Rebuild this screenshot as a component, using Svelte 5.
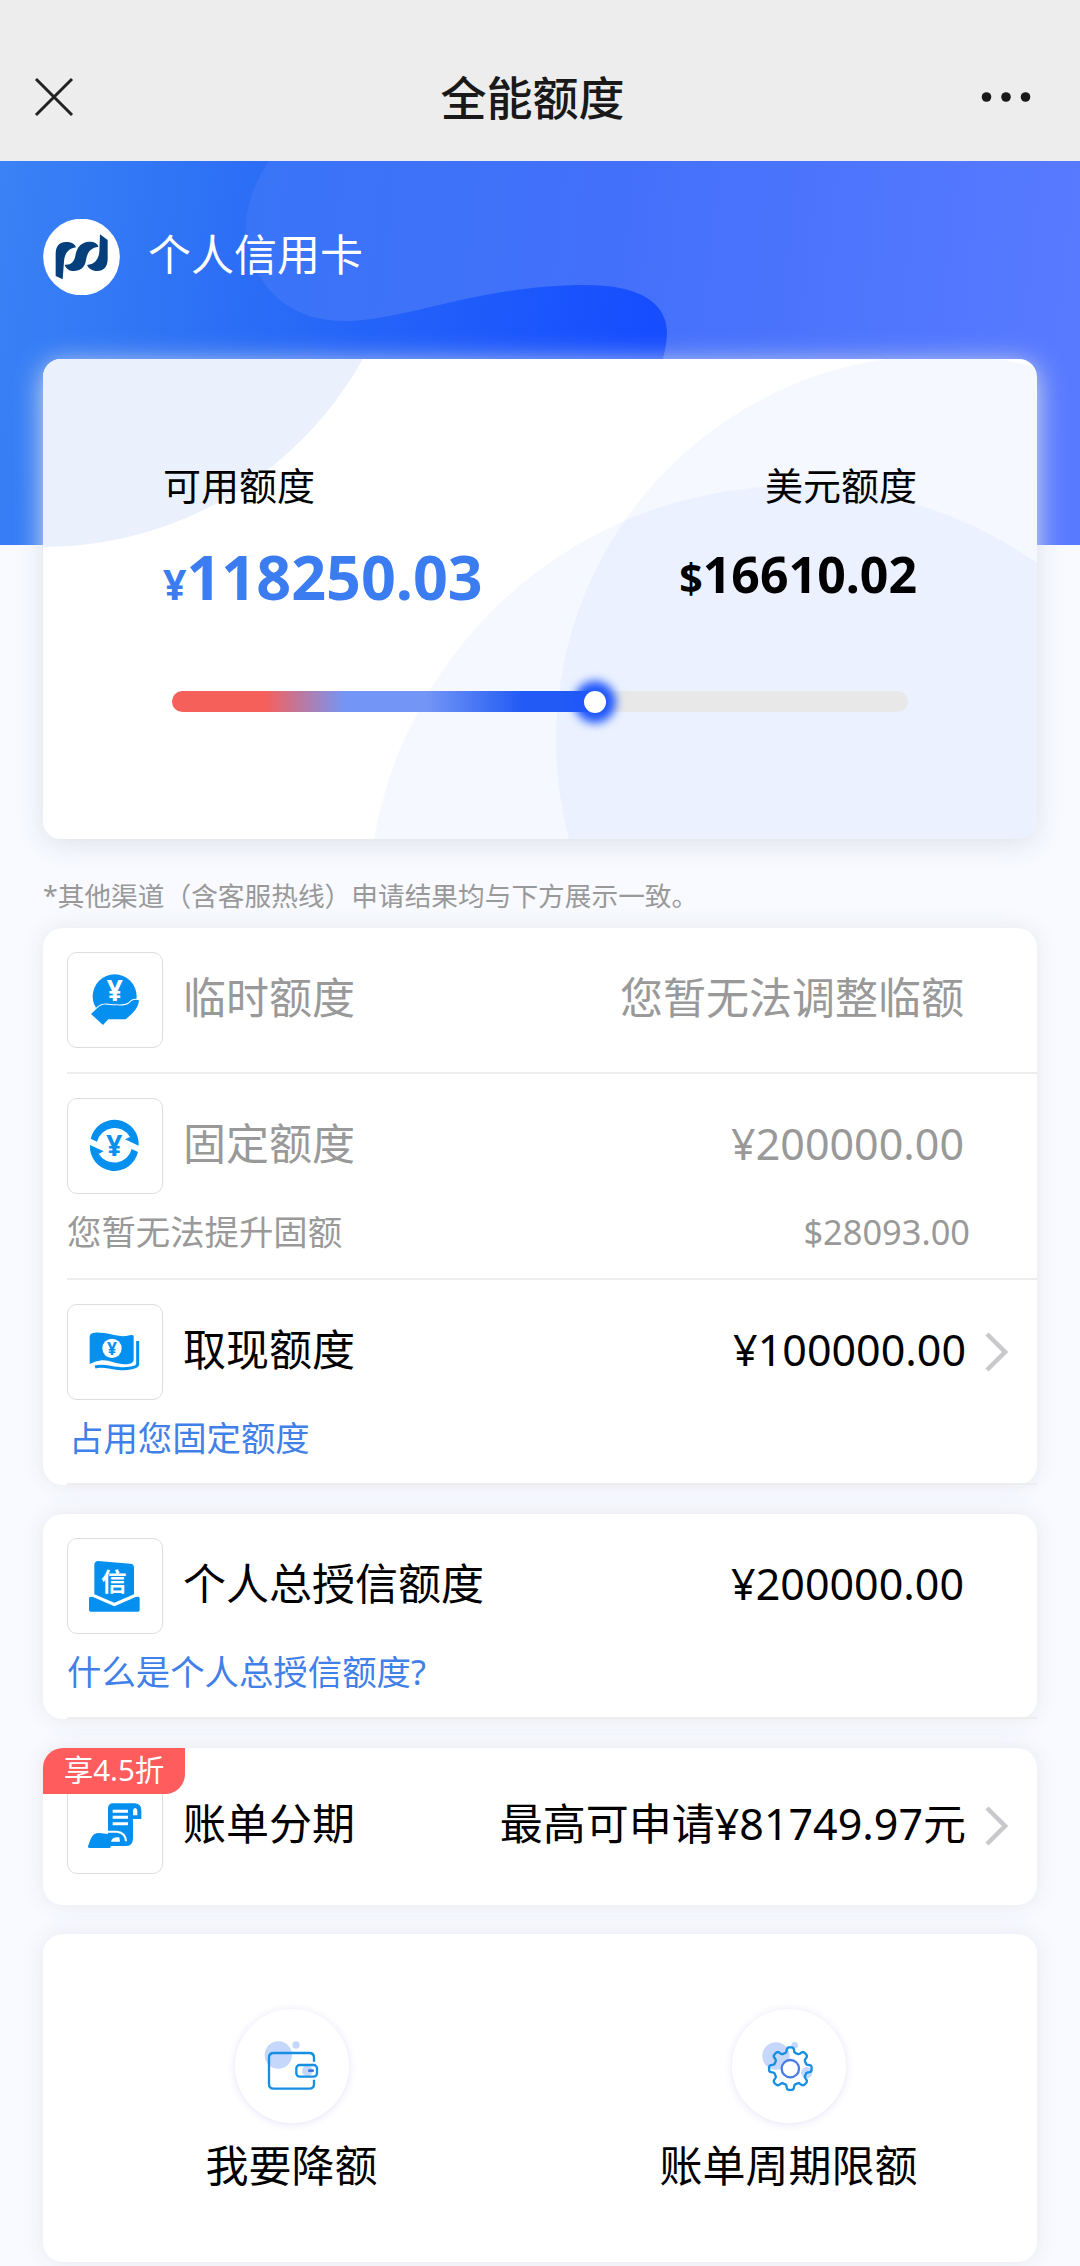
<script lang="ts">
  type Row = {
    icon: string;
    title: string;
    value: string;
    muted?: boolean;
    arrow?: boolean;
    note?: string;
    noteValue?: string;
    link?: boolean;
    indent?: boolean;
    badge?: string;
  };

  const groups: Row[][] = [
    [
      { icon: 'temp', title: '临时额度', value: '您暂无法调整临额', muted: true },
      {
        icon: 'fixed',
        title: '固定额度',
        value: '¥200000.00',
        muted: true,
        note: '您暂无法提升固额',
        noteValue: '$28093.00',
      },
      {
        icon: 'cash',
        title: '取现额度',
        value: '¥100000.00',
        arrow: true,
        note: '占用您固定额度',
        link: true,
        indent: true,
      },
    ],
    [
      {
        icon: 'credit',
        title: '个人总授信额度',
        value: '¥200000.00',
        note: '什么是个人总授信额度?',
        link: true,
      },
    ],
    [
      {
        icon: 'bill',
        title: '账单分期',
        value: '最高可申请¥81749.97元',
        arrow: true,
        badge: '享4.5折',
      },
    ],
  ];

  const usedPercent = 57.5;

  // Closed eight-tooth outline around (175, 179)
  function gearPath(): string {
    const points: string[] = [];
    for (let i = 0; i < 240; i++) {
      const angle = (i / 240) * Math.PI * 2;
      const r = 56.5 + 7.5 * Math.tanh(2.4 * Math.cos(8 * angle));
      points.push(`${(175 + r * Math.cos(angle)).toFixed(1)} ${(179 + r * Math.sin(angle)).toFixed(1)}`);
    }
    return `M${points.join('L')}Z`;
  }
</script>

<div class="page">
  <header class="navbar">
    <svg class="close" viewBox="0 0 40 40" aria-label="关闭">
      <path d="M2 2 L38 38 M38 2 L2 38" />
    </svg>
    <h1>全能额度</h1>
    <svg class="more" viewBox="0 0 50 12" aria-label="更多">
      <circle cx="5.5" cy="6" r="4.8" />
      <circle cx="25" cy="6" r="4.8" />
      <circle cx="44.5" cy="6" r="4.8" />
    </svg>
  </header>

  <section class="hero">
    <svg class="hero-bg" viewBox="0 0 1080 384" preserveAspectRatio="none">
      <defs>
        <linearGradient id="base" gradientUnits="userSpaceOnUse" x1="0" y1="0" x2="660" y2="90">
          <stop offset="0" stop-color="#3a82f5" />
          <stop offset="0.4" stop-color="#2b6df6" />
          <stop offset="1" stop-color="#164dff" />
        </linearGradient>
        <linearGradient id="wave" gradientUnits="userSpaceOnUse" x1="246" y1="0" x2="1080" y2="90">
          <stop offset="0" stop-color="#3974f7" />
          <stop offset="0.45" stop-color="#4370fb" />
          <stop offset="1" stop-color="#587aff" />
        </linearGradient>
      </defs>
      <rect width="1080" height="384" fill="url(#base)" />
      <path
        d="M269 0 C254 22 246 45 246 66 C248 115 280 160 345 160 C405 160 480 124 585 124 C640 124 667 142 667 172 C666 192 662 200 655 224 L640 384 H1080 V0 Z"
        fill="url(#wave)"
      />
    </svg>

    <div class="account">
      <svg class="logo" viewBox="39 57 231 228">
        <circle cx="154.500" cy="171" r="115" fill="#fff" />
        <g fill="#053f7c">
          <path d="M77 228 V162 C77 138 88 126 108 126 C124 126 134 130 138 142 C116 145 104 160 102 184 L98 238 Z" />
          <path d="M104 194 C122 196 132 186 136 168 C140 142 153 126 178 125 C193 125 202 130 205 140 C182 143 171 158 168 181 C164 204 150 213 132 213 C118 213 108 206 104 194 Z" />
          <path d="M210 103 L233 120 V178 C232 202 221 213 202 213 C186 213 176 206 171 195 C194 193 206 178 208 155 Z" />
        </g>
      </svg>
      <span>个人信用卡</span>
    </div>

    <div class="summary">
      <svg class="summary-bg" viewBox="43 359 994 480">
        <circle cx="43" cy="181" r="366" fill="#eaf1fd" />
        <circle cx="941" cy="740" r="385" fill="#3c78fa" fill-opacity="0.05" />
        <circle cx="793" cy="911" r="425" fill="#3c78fa" fill-opacity="0.05" />
        <path d="M941 359 Z" />
      </svg>
      <div class="amounts">
        <div class="amount">
          <span class="caption">可用额度</span>
          <strong class="cny"><small>¥</small>118250.03</strong>
        </div>
        <div class="amount right">
          <span class="caption">美元额度</span>
          <strong class="usd"><small>$</small>16610.02</strong>
        </div>
      </div>
      <div class="track">
        <div class="fill" style="width: {usedPercent}%">
          <i class="thumb"></i>
        </div>
      </div>
    </div>
  </section>

  <p class="hint">*其他渠道（含客服热线）申请结果均与下方展示一致。</p>

  <main>
    {#each groups as rows}
      <section class="card">
        {#each rows as row}
          <div class="item" class:muted={row.muted} class:promo={row.badge}>
            {#if row.badge}
              <span class="badge">{row.badge}</span>
            {/if}
            <div class="line">
              <div class="icon">{@render icon(row.icon)}</div>
              <span class="title">{row.title}</span>
              <span class="value">{row.value}</span>
              {#if row.arrow}
                <svg class="chevron" viewBox="0 0 24 42">
                  <path d="M3 3 L21 21 L3 39" />
                </svg>
              {/if}
            </div>
            {#if row.note}
              <div class="sub" class:link={row.link} class:indent={row.indent}>
                <span>{row.note}</span>
                {#if row.noteValue}<span>{row.noteValue}</span>{/if}
              </div>
            {/if}
          </div>
        {/each}
      </section>
    {/each}

    <section class="card actions">
      <div class="action">
        <div class="round">
          <svg viewBox="0 0 342 342" fill="none">
            <circle cx="130" cy="138" r="41" fill="#c5d7fb" />
            <circle cx="183" cy="108" r="11" fill="#c5d7fb" />
            <path
              d="M237 158 V146 Q237 132 223 132 H116 Q102 132 102 146 V225 Q102 239 116 239 H223 Q237 239 237 225 V212"
              stroke="#168fe3"
              stroke-width="7"
            />
            <circle cx="217" cy="185" r="16" fill="#c5d7fb" />
            <rect x="184" y="168" width="62" height="35" rx="10" stroke="#168fe3" stroke-width="7" />
            <path d="M223 185 H233" stroke="#3c78e2" stroke-width="8" stroke-linecap="round" />
          </svg>
        </div>
        <span>我要降额</span>
      </div>
      <div class="action">
        <div class="round">
          <svg viewBox="0 0 342 342" fill="none">
            <circle cx="132" cy="141" r="41" fill="#c5d7fb" />
            <circle cx="188" cy="109" r="10" fill="#c5d7fb" />
            <circle cx="224" cy="191" r="17" fill="#c5d7fb" />
            <path d={gearPath()} stroke="#168fe3" stroke-width="7" stroke-linejoin="round" />
            <circle cx="175" cy="179" r="26" fill="#fff" stroke="#4b7ce6" stroke-width="7" />
          </svg>
        </div>
        <span>账单周期限额</span>
      </div>
    </section>
  </main>
</div>

{#snippet icon(name: string)}
  <svg viewBox="0 0 288 288" fill="#0590f0">
    {#if name === 'temp'}
      <circle cx="143" cy="133" r="66" />
      <text x="143" y="148" font-size="84" fill="#fff">¥</text>
      <path
        d="M72 186 L95 164 C110 152 128 160 146 160 C163 161 179 161 188 152 C195 144 204 141 216 145 C215 160 206 175 193 187 L176 202 H124 L108 219 Z"
        stroke="#fff"
        stroke-width="6"
        paint-order="stroke"
      />
    {:else if name === 'fixed'}
      <path d="M71 122 A73 73 0 0 1 215 143 L174 124 L189 117 A54 54 0 0 0 90 131 Z" />
      <path
        d="M71 122 A73 73 0 0 1 215 143 L174 124 L189 117 A54 54 0 0 0 90 131 Z"
        transform="rotate(180 142 142)"
      />
      <text x="142" y="173" font-size="84">¥</text>
    {:else if name === 'cash'}
      <path
        d="M68 96 Q70 87 84 86 C118 84 148 99 178 96 Q199 90 200 96 V166 Q200 179 184 180 C150 184 130 167 104 169 Q86 171 68 180 Z"
      />
      <path
        d="M84 189 C108 180 134 194 170 194 Q212 192 212 180 V111"
        fill="none"
        stroke="#0590f0"
        stroke-width="9"
      />
      <circle cx="135" cy="133" r="29" fill="#fff" />
      <text x="135" y="152" font-size="52">¥</text>
    {:else if name === 'credit'}
      <path d="M82 80 Q83 69 93 69 L190 77 Q201 78 201 88 V169 L142 194 L82 169 Z" />
      <path d="M66 181 Q66 176 72 176 L78 177 L142 205 L206 177 L213 176 Q218 176 218 181 V216 Q218 221 213 221 H71 Q66 221 66 216 Z" />
      <text x="141" y="159" font-size="76" fill="#fff">信</text>
    {:else if name === 'bill'}
      <path
        d="M123 168 V90 Q124 76 138 76 H204 Q223 78 223 96 V123 H198 V182 Q197 204 177 204 H132 L129 210 H67 Q61 209 64 202 L72 181 Q79 165 96 165 Z"
      />
      <path d="M198 112 V100 Q199 90 205 90 Q211 91 211 100 V112 Z" fill="#fff" />
      <path
        d="M137 100 H183 M137 118 H183 M137 137 H183"
        fill="none"
        stroke="#fff"
        stroke-width="9"
      />
      <path d="M85 161 H150 Q176 164 177 190" fill="none" stroke="#fff" stroke-width="6" />
      <path d="M132 191 Q136 175 157 178 L159 191 Z" fill="#fff" />
    {/if}
  </svg>
{/snippet}

<style>
  :global(body) {
    margin: 0;
    background: #f8faff;
  }

  .page {
    width: 1080px;
    height: 2266px;
    overflow: hidden;
    background: #f8faff;
    color: #000;
    font-family: 'Noto Sans', 'Noto Sans CJK SC', sans-serif;
  }

  .navbar {
    display: flex;
    align-items: center;
    justify-content: space-between;
    box-sizing: border-box;
    height: 161px;
    padding: 32px 49px 0 34px;
    background: #ededed;
  }

  .navbar h1 {
    margin: 0 0 0 10px;
    font-size: 46px;
    font-weight: 500;
    line-height: 60px;
    color: #191919;
  }

  .close {
    width: 40px;
    height: 40px;
    fill: none;
    stroke: #222;
    stroke-width: 3;
  }

  .more {
    width: 50px;
    height: 12px;
    fill: #191919;
  }

  .hero {
    position: relative;
    padding: 57px 43px 0;
  }

  .hero-bg {
    position: absolute;
    top: 0;
    left: 0;
    width: 1080px;
    height: 384px;
  }

  .account {
    position: relative;
    display: flex;
    align-items: center;
    gap: 28px;
    height: 78px;
    font-size: 43px;
    line-height: 60px;
    color: #fff;
  }

  .account span {
    padding-bottom: 4px;
  }

  .logo {
    width: 77px;
    height: 76px;
  }

  .summary {
    position: relative;
    box-sizing: border-box;
    height: 480px;
    margin-top: 63px;
    padding: 99px 120px 0;
    border-radius: 18px;
    background: #fff;
    box-shadow: 0 5px 28px #dde2e8;
  }

  .summary-bg {
    position: absolute;
    inset: 0;
    width: 994px;
    height: 480px;
    border-radius: 18px;
  }

  .amounts {
    position: relative;
    display: flex;
    justify-content: space-between;
  }

  .amount {
    display: flex;
    flex-direction: column;
  }

  .amount.right {
    align-items: flex-end;
  }

  .caption {
    font-size: 38px;
    line-height: 54px;
  }

  .amount strong {
    margin-top: 25px;
    font-weight: 700;
    line-height: 80px;
    white-space: nowrap;
  }

  .amount small {
    font-size: 41px;
    line-height: 1;
  }

  .cny {
    font-size: 61px;
    color: #3b7df0;
  }

  .amount .usd {
    margin-top: 22px;
    font-size: 50px;
  }

  .track {
    position: relative;
    height: 21px;
    margin: 74px 9px 0;
    border-radius: 11px;
    background: #e8e8e8;
  }

  .fill {
    display: flex;
    align-items: center;
    justify-content: flex-end;
    height: 100%;
    border-radius: 11px 0 0 11px;
    background: linear-gradient(90deg, #f6605b 22%, #7396f6 41%, #7396f6 60%, #215af5 83%);
  }

  .thumb {
    flex: none;
    width: 22px;
    height: 22px;
    margin-right: -11px;
    border-radius: 50%;
    background: #fff;
    box-shadow: 0 0 10px 10px #1f57fb;
  }

  .hint {
    margin: 34px 43px 9px;
    font-size: 26.7px;
    line-height: 46px;
    color: #999;
  }

  main {
    display: flex;
    flex-direction: column;
    gap: 29px;
    padding: 0 43px;
  }

  .card {
    border-radius: 20px;
    background: #fff;
    box-shadow: 0 0 22px #e6e8ee;
  }

  .item {
    position: relative;
    margin-left: 24px;
    padding-top: 24px;
    border-bottom: 2px solid #ededed;
  }

  .item.promo {
    padding: 30px 0 7px;
    border-bottom: 0;
  }

  .line {
    display: flex;
    align-items: center;
    height: 96px;
    padding: 0 29px 0 0;
    font-size: 43px;
    line-height: 60px;
  }

  .line:last-child {
    padding-bottom: 24px;
  }

  .muted {
    color: #999;
  }

  .icon {
    box-sizing: border-box;
    width: 96px;
    height: 96px;
    border: 1px solid #ddd;
    border-radius: 10px;
  }

  .icon svg {
    display: block;
    width: 96px;
    height: 96px;
    margin: -1px;
  }

  .icon text {
    font-weight: 700;
    text-anchor: middle;
  }

  .title {
    margin-left: 20px;
    padding-bottom: 4px;
  }

  .value {
    margin-left: auto;
    margin-right: 44px;
    padding-bottom: 4px;
  }

  .chevron {
    width: 24px;
    height: 42px;
    margin-left: -26px;
    fill: none;
    stroke: #c8c8cd;
    stroke-width: 4.5;
  }

  .sub {
    display: flex;
    justify-content: space-between;
    padding: 8px 67px 16px 0;
    font-size: 34.4px;
    line-height: 60px;
    color: #999;
  }

  .sub.link {
    padding-bottom: 15px;
    color: #4080e8;
  }

  .sub.indent {
    padding-left: 2px;
  }

  .badge {
    position: absolute;
    top: 0;
    left: -24px;
    width: 142px;
    height: 46px;
    border-radius: 20px 0 20px 0;
    background: #ff5c5e;
    font-size: 29.5px;
    line-height: 43px;
    text-align: center;
    color: #fff;
  }

  .actions {
    display: flex;
    height: 328px;
  }

  .action {
    display: flex;
    flex: 1;
    flex-direction: column;
    align-items: center;
    padding-top: 75px;
    font-size: 43px;
    line-height: 60px;
  }

  .round {
    width: 114px;
    height: 114px;
    margin-bottom: 13px;
    border-radius: 50%;
    background: #fff;
    box-shadow: 0 1px 10px #e6e4f8;
  }

  .round svg {
    display: block;
  }
</style>
